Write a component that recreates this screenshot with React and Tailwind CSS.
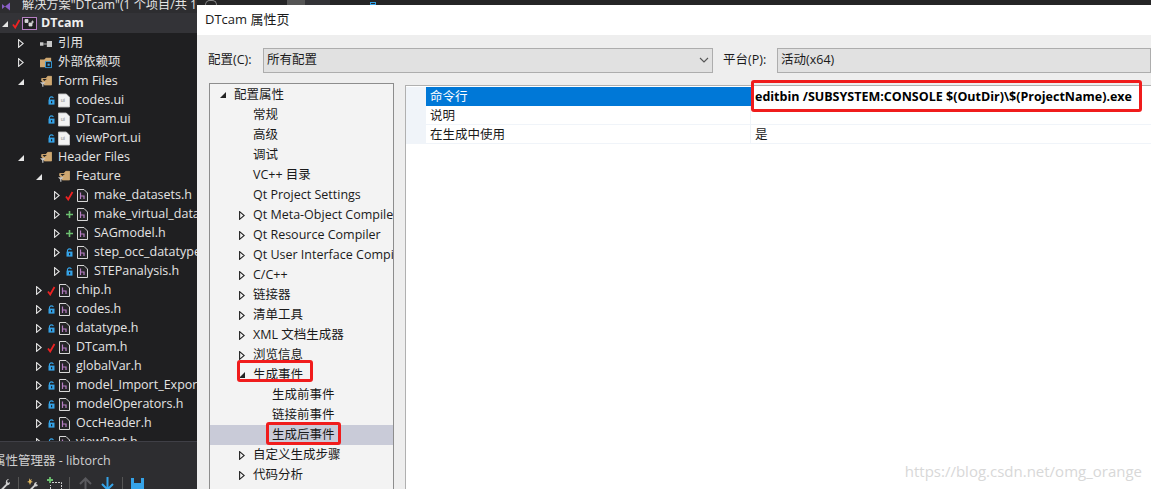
import React from "react";

const FONT = { fontFamily: '"Open Sans", "Noto Sans CJK SC", sans-serif' };

const Hollow = () => (
  <svg width="6" height="9" viewBox="0 0 6 9" className="block">
    <path d="M0.6 0.7 L5.2 4.5 L0.6 8.3 Z" fill="none" stroke="currentColor" strokeWidth="1.1" />
  </svg>
);

const Filled = () => (
  <svg width="6" height="6" viewBox="0 0 6 6" className="block">
    <path d="M6 0 V6 H0 Z" fill="currentColor" />
  </svg>
);

const Check = () => (
  <svg width="9" height="10" viewBox="0 0 9 10">
    <path d="M1 5.5 L3.2 8.5 L7.5 1" fill="none" stroke="#ee2222" strokeWidth="1.8" />
  </svg>
);

const Plus = () => (
  <svg width="9" height="9" viewBox="0 0 9 9">
    <path d="M4.5 1 V8 M1 4.5 H8" stroke="#6cc070" strokeWidth="1.6" />
  </svg>
);

const Lock = () => (
  <svg width="7" height="9" viewBox="0 0 7 9">
    <path d="M1.5 4 V2 Q3.5 -0.2 5.5 2" fill="none" stroke="#35a3e8" strokeWidth="1.1" />
    <rect x="0.5" y="3.6" width="6" height="5" fill="#35a3e8" />
    <rect x="3" y="5.2" width="1.2" height="2" fill="#1f1f21" />
  </svg>
);

const HFile = () => (
  <svg width="11" height="13" viewBox="0 0 11 13">
    <path d="M0.5 0.5 H7 L10.5 4 V12.5 H0.5 Z" fill="#252527" stroke="#d8d8d8" />
    <path d="M3.5 3.5 V10 M3.5 7 H7 V10" fill="none" stroke="#b77fc4" strokeWidth="1.2" />
  </svg>
);

const UiFile = () => (
  <svg width="13" height="15" viewBox="0 0 13 15">
    <path d="M0.5 0.5 H9 L12.5 4 V14.5 H0.5 Z" fill="#f2f2f2" stroke="#c8c8c8" />
    <text x="3" y="9" fontSize="6" fill="#8a8a8a" fontFamily="Liberation Sans">ui</text>
  </svg>
);

const FilterFolder = () => (
  <svg width="14" height="13" viewBox="0 0 14 13">
    <path d="M2 6 V3 H7 L9 0.5 H13.5 V10.5 H5" fill="#d0a871" stroke="#d0a871" />
    <path d="M3 3.5 H8 L5 6" fill="#1f1f21" />
    <path d="M0 7.5 H6.5 L4 10 V12.5 H2.6 V10 Z" fill="#c8c8c8" />
  </svg>
);

const RefIcon = () => (
  <svg width="14" height="8" viewBox="0 0 14 8">
    <rect x="0" y="2" width="4" height="4" fill="#c8c8c8" />
    <rect x="4" y="3.5" width="4" height="1" fill="#c8c8c8" />
    <rect x="8" y="0.5" width="6" height="7" fill="#c8c8c8" />
  </svg>
);

const ExtIcon = () => (
  <svg width="14" height="13" viewBox="0 0 14 13">
    <path d="M0 3 H5 L7 1 H13 V9 H6 V12 H0 Z" fill="#d0a871" />
    <rect x="6.5" y="5.5" width="7" height="7" fill="#1f1f21" stroke="#35a3e8" />
    <rect x="8.8" y="7.8" width="2.5" height="2.5" fill="#35a3e8" />
  </svg>
);

const ProjectIcon = () => (
  <svg width="15" height="13" viewBox="0 0 15 13">
    <rect x="0.5" y="0.5" width="14" height="12" fill="#1f1f21" stroke="#b77fc4" />
    <path d="M3 2.5 H6 V5.5 H3 Z M7 6 H10 V9 H7 Z M10.5 3.5 V6.5 M9 5 H12" fill="#d8d8d8" stroke="#d8d8d8" strokeWidth="0.8" />
  </svg>
);

const status = { check: <Check />, plus: <Plus />, lock: <Lock /> };
const icons = { h: <HFile />, ui: <UiFile />, folder: <FilterFolder />, ref: <RefIcon />, ext: <ExtIcon /> };

const solutionRows = [
  { x: 15, arrow: "hollow", icon: "ref", text: "引用" },
  { x: 15, arrow: "hollow", icon: "ext", text: "外部依赖项" },
  { x: 15, arrow: "filled", icon: "folder", text: "Form Files" },
  { x: 33, st: "lock", icon: "ui", text: "codes.ui" },
  { x: 33, st: "lock", icon: "ui", text: "DTcam.ui" },
  { x: 33, st: "lock", icon: "ui", text: "viewPort.ui" },
  { x: 15, arrow: "filled", icon: "folder", text: "Header Files" },
  { x: 33, arrow: "filled", icon: "folder", text: "Feature" },
  { x: 51, arrow: "hollow", st: "check", icon: "h", text: "make_datasets.h" },
  { x: 51, arrow: "hollow", st: "plus", icon: "h", text: "make_virtual_data.h" },
  { x: 51, arrow: "hollow", st: "plus", icon: "h", text: "SAGmodel.h" },
  { x: 51, arrow: "hollow", st: "lock", icon: "h", text: "step_occ_datatype.h" },
  { x: 51, arrow: "hollow", st: "lock", icon: "h", text: "STEPanalysis.h" },
  { x: 33, arrow: "hollow", st: "check", icon: "h", text: "chip.h" },
  { x: 33, arrow: "hollow", st: "lock", icon: "h", text: "codes.h" },
  { x: 33, arrow: "hollow", st: "lock", icon: "h", text: "datatype.h" },
  { x: 33, arrow: "hollow", st: "check", icon: "h", text: "DTcam.h" },
  { x: 33, arrow: "hollow", st: "lock", icon: "h", text: "globalVar.h" },
  { x: 33, arrow: "hollow", st: "lock", icon: "h", text: "model_Import_Export.h" },
  { x: 33, arrow: "hollow", st: "lock", icon: "h", text: "modelOperators.h" },
  { x: 33, arrow: "hollow", st: "lock", icon: "h", text: "OccHeader.h" },
  { x: 33, arrow: "hollow", st: "lock", icon: "h", text: "viewPort.h" },
];

const propRows = [
  { level: 0, arrow: "filled", text: "配置属性" },
  { level: 1, text: "常规" },
  { level: 1, text: "高级" },
  { level: 1, text: "调试" },
  { level: 1, text: "VC++ 目录" },
  { level: 1, text: "Qt Project Settings" },
  { level: 1, arrow: "hollow", text: "Qt Meta-Object Compiler" },
  { level: 1, arrow: "hollow", text: "Qt Resource Compiler" },
  { level: 1, arrow: "hollow", text: "Qt User Interface Compiler" },
  { level: 1, arrow: "hollow", text: "C/C++" },
  { level: 1, arrow: "hollow", text: "链接器" },
  { level: 1, arrow: "hollow", text: "清单工具" },
  { level: 1, arrow: "hollow", text: "XML 文档生成器" },
  { level: 1, arrow: "hollow", text: "浏览信息" },
  { level: 1, arrow: "filled", text: "生成事件" },
  { level: 2, text: "生成前事件" },
  { level: 2, text: "链接前事件" },
  { level: 2, text: "生成后事件", selected: true },
  { level: 1, arrow: "hollow", text: "自定义生成步骤" },
  { level: 1, arrow: "hollow", text: "代码分析" },
];

function SolutionRow({ row }) {
  return (
    <div className="flex h-[19px] shrink-0 items-center whitespace-nowrap" style={{ paddingLeft: row.x }}>
      <span className="flex w-[12px] shrink-0 items-center justify-center text-[#e6e6e6]">
        {row.arrow === "hollow" && <Hollow />}
        {row.arrow === "filled" && <Filled />}
      </span>
      <span className="flex w-[13px] shrink-0 items-center justify-center">{row.st && status[row.st]}</span>
      <span className="flex w-[12px] shrink-0 items-center justify-center">{icons[row.icon]}</span>
      <span className="ml-[6px]">{row.text}</span>
    </div>
  );
}

function PropRow({ row }) {
  const indent = { 0: "pl-[10px]", 1: "pl-[29px]", 2: "pl-[62px]" }[row.level];
  return (
    <div className={`flex h-[20px] shrink-0 items-center whitespace-nowrap ${indent} ${row.selected ? "bg-[#c9cbd8]" : ""}`}>
      {row.level < 2 && (
        <span className="flex w-[14px] shrink-0 items-center text-[#222]">
          {row.arrow === "hollow" && <Hollow />}
          {row.arrow === "filled" && <Filled />}
        </span>
      )}
      <span>{row.text}</span>
    </div>
  );
}

function SelectBox({ text, className, chevron }) {
  return (
    <div className={`flex h-[25px] items-center border border-[#adadad] bg-[#e1e1e1] pl-[3px] text-[#1a1a1a] ${className}`}>
      <span className="flex-1">{text}</span>
      {chevron && (
        <svg width="10" height="6" viewBox="0 0 10 6" className="mr-[3px]">
          <path d="M1 1 L5 5 L9 1" fill="none" stroke="#555" strokeWidth="1.1" />
        </svg>
      )}
    </div>
  );
}

export default function App() {
  return (
    <div className="relative flex h-[489px] w-[1151px] overflow-hidden bg-[#1f1f21] text-[12.5px]" style={FONT}>
      {/* Explorador de soluciones */}
      <div className="flex h-full w-[197px] shrink-0 flex-col overflow-hidden text-[#e4e4e4]">
        <div className="flex h-[13px] shrink-0 items-center bg-[#2d2d30] pl-[2px]">
          <svg width="9" height="9" viewBox="0 0 9 9" className="shrink-0">
            <path d="M0 2 L3 4.5 L0 7 Z M3 4.5 L8 0.5 V8.5 Z" fill="#8a5fc8" />
          </svg>
          <span className="ml-[11px] mt-[-3px] whitespace-nowrap text-[12.2px]">解决方案"DTcam"(1 个项目/共 1 个)</span>
        </div>
        <div className="flex h-[20px] shrink-0 items-center bg-[#333337] pt-[1px] font-bold text-[#f0f0f0]">
          <span className="ml-[1px] flex w-[8px] justify-center text-[#e6e6e6]"><Filled /></span>
          <span className="ml-[3px] flex w-[9px] justify-center"><Check /></span>
          <span className="ml-[1px]"><ProjectIcon /></span>
          <span className="ml-[4px]">DTcam</span>
        </div>
        <div className="flex h-[408px] shrink-0 flex-col overflow-hidden pt-[1px]">
          {solutionRows.map((row) => (
            <SolutionRow key={row.text} row={row} />
          ))}
        </div>
        <div className="h-[8px] shrink-0 border-t border-[#3f3f46] bg-[#2d2d30]" />
        <div className="flex h-[24px] shrink-0 items-center whitespace-nowrap bg-[#2d2d30] text-[#d0d0d0]">
          <span className="ml-[-7px]">属性管理器 - libtorch</span>
        </div>
        <div className="flex flex-1 items-start overflow-hidden bg-[#2d2d30] pt-[4px]">
          <svg width="12" height="14" viewBox="0 0 12 14" className="ml-[-1px] shrink-0">
            <path d="M1 13 L7 7 Q6 3 9 2 L10 2 L8 4 L9 6 L11 5 Q11 8 8 8.500 L3 14 Z" fill="#d0d0d0" />
          </svg>
          <span className="ml-[7px] h-[16px] w-px shrink-0 bg-[#555]" />
          <svg width="12" height="14" viewBox="0 0 12 14" className="ml-[8px] shrink-0">
            <path d="M2 1 L3 3 L5 2 L4 4 L6 5 L4 5.500 L3 8 L2 5.500 L0 5 L2 4 Z" fill="#e0b860" />
            <path d="M2 13 L7 8 Q7 5 10 5 L9 7 L11 8 Q10 10 8 9.500 L4 14 Z" fill="#d0d0d0" />
          </svg>
          <svg width="15" height="14" viewBox="0 0 15 14" className="ml-[8px] shrink-0">
            <path d="M3 0 V6 M0 3 H6" stroke="#6cc070" strokeWidth="1.8" />
            <path d="M5 5.500 H14.500 V13.500 H3.500 V8" fill="none" stroke="#d0d0d0" strokeDasharray="2 1" />
          </svg>
          <span className="ml-[7px] h-[16px] w-px shrink-0 bg-[#555]" />
          <svg width="13" height="14" viewBox="0 0 13 14" className="ml-[9px] shrink-0">
            <path d="M6.500 14 V2 M1 7 L6.500 1.500 L12 7" fill="none" stroke="#5a5a5e" strokeWidth="2" />
          </svg>
          <svg width="13" height="14" viewBox="0 0 13 14" className="ml-[9px] shrink-0">
            <path d="M6.500 0 V12 M1 7 L6.500 12.500 L12 7" fill="none" stroke="#35a3e8" strokeWidth="2" />
          </svg>
          <span className="ml-[8px] h-[16px] w-px shrink-0 bg-[#555]" />
          <svg width="13" height="14" viewBox="0 0 13 14" className="ml-[8px] shrink-0">
            <path d="M0 1 H13 V14 H0 Z" fill="#35a3e8" />
            <rect x="3" y="1" width="7" height="5" fill="#2d2d30" />
          </svg>
        </div>
      </div>

      {/* Ventana de propiedades */}
      <div className="flex h-full min-w-0 flex-1 flex-col">
        <div className="flex h-[5px] shrink-0 items-end bg-[#252526]">
          <span className="ml-[8px] h-[5px] w-[12px] rounded-t-full border-x border-t border-[#888]" />
          <span className="ml-[70px] h-[5px] w-[18px] bg-[#555]" />
          <span className="h-[5px] w-[25px] bg-[#333337]" />
          <span className="ml-[40px] h-[3px] w-[6px] border border-[#35a3e8]" />
        </div>
        <div className="flex h-[30px] shrink-0 items-center bg-white pl-[8px] text-[13px] text-[#1a1a1a]">DTcam 属性页</div>
        <div className="flex min-h-0 flex-1 flex-col bg-[#eeeeee] text-[#1a1a1a]">
          <div className="flex h-[48px] shrink-0 items-center pl-[11px] pt-[2px]">
            <span className="w-[55px] shrink-0">配置(C):</span>
            <SelectBox text="所有配置" chevron className="w-[450px]" />
            <span className="ml-[10px] w-[54px] shrink-0">平台(P):</span>
            <SelectBox text="活动(x64)" className="flex-1" />
          </div>
          <div className="flex min-h-0 flex-1">
            <div className="ml-[12px] flex w-[185px] shrink-0 flex-col overflow-hidden border border-b-0 border-[#8d8d8d] bg-[#f3f3f3] pt-[1px]">
              {propRows.map((row) => (
                <PropRow key={row.text} row={row} />
              ))}
            </div>
            <div className="ml-[11px] mt-[2px] flex flex-1 flex-col overflow-hidden border-l border-t border-[#b0b0b0] bg-white pt-[1px]">
              <div className="flex h-[19px] shrink-0 items-center">
                <span className="h-full w-[20px] shrink-0 bg-[#f0f4f9]" />
                <span className="flex h-full w-[325px] shrink-0 items-center bg-[#0078d7] pl-[4px] pt-[2px] text-white">命令行</span>
                <span className="pl-[4px] pt-[2px] font-bold text-black">editbin /SUBSYSTEM:CONSOLE $(OutDir)\$(ProjectName).exe</span>
              </div>
              <div className="flex h-[19px] shrink-0 items-center border-b border-[#f0f4f9]">
                <span className="h-full w-[20px] shrink-0 bg-[#f0f4f9]" />
                <span className="flex h-full w-[325px] shrink-0 items-center border-r border-[#f0f4f9] pl-[4px] pt-[2px]">说明</span>
              </div>
              <div className="flex h-[19px] shrink-0 items-center border-b border-[#f0f4f9]">
                <span className="h-full w-[20px] shrink-0 bg-[#f0f4f9]" />
                <span className="flex h-full w-[325px] shrink-0 items-center border-r border-[#f0f4f9] pl-[4px] pt-[2px]">在生成中使用</span>
                <span className="pl-[4px] pt-[2px]">是</span>
              </div>
            </div>
          </div>
        </div>
      </div>

      {/* Marcas rojas y marca de agua sobre la captura */}
      <div className="absolute left-[237px] top-[360px] h-[22px] w-[76px] rounded-[3px] border-[3px] border-[#f01c1c]" />
      <div className="absolute left-[266px] top-[422px] h-[23px] w-[75px] rounded-[3px] border-[3px] border-[#f01c1c]" />
      <div className="absolute left-[751px] top-[80px] h-[32px] w-[391px] rounded-[3px] border-[3px] border-[#f01c1c]" />
      <div className="absolute right-[9px] top-[460px] text-[15px] text-[#d8d8d8]">https://blog.csdn.net/omg_orange</div>
    </div>
  );
}
